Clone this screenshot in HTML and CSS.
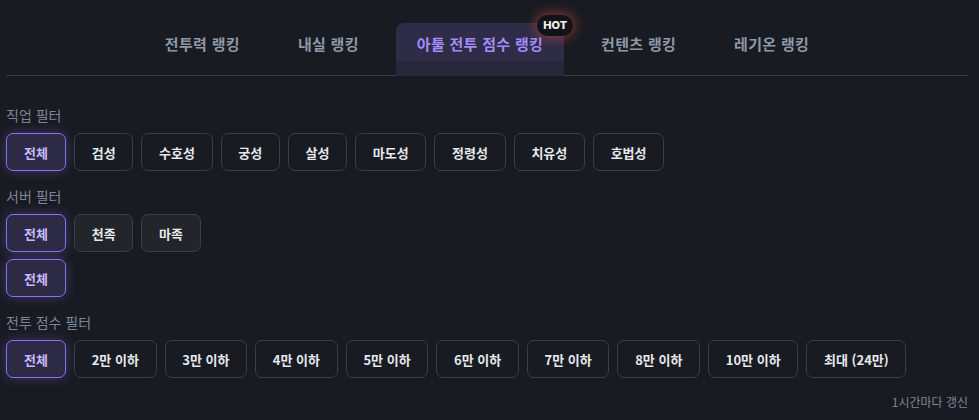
FILE: index.html
```html
<!DOCTYPE html>
<html lang="ko">

<head>
    <meta charset="UTF-8">
    <meta name="viewport" content="width=device-width, initial-scale=1.0">
    <title>랭킹</title>
    <link rel="stylesheet" href="styles.css">
</head>

<body>
    <div class="ranking-page">
        <!-- 랭킹 탭 -->
        <nav class="tab-bar">
            <a class="tab">전투력 랭킹</a>
            <a class="tab">내실 랭킹</a>
            <a class="tab active">아툴 전투 점수 랭킹<span class="hot-badge">HOT</span></a>
            <a class="tab">컨텐츠 랭킹</a>
            <a class="tab">레기온 랭킹</a>
        </nav>

        <!-- 직업 필터 -->
        <section class="filter-group">
            <div class="filter-label">직업 필터</div>
            <div class="filter-row">
                <button class="filter-btn active">전체</button>
                <button class="filter-btn">검성</button>
                <button class="filter-btn">수호성</button>
                <button class="filter-btn">궁성</button>
                <button class="filter-btn">살성</button>
                <button class="filter-btn">마도성</button>
                <button class="filter-btn">정령성</button>
                <button class="filter-btn">치유성</button>
                <button class="filter-btn">호법성</button>
            </div>
        </section>

        <!-- 서버 필터 -->
        <section class="filter-group">
            <div class="filter-label">서버 필터</div>
            <div class="filter-row">
                <button class="filter-btn active">전체</button>
                <button class="filter-btn filled">천족</button>
                <button class="filter-btn filled">마족</button>
            </div>
            <div class="filter-row">
                <button class="filter-btn active">전체</button>
            </div>
        </section>

        <!-- 전투 점수 필터 -->
        <section class="filter-group">
            <div class="filter-label">전투 점수 필터</div>
            <div class="filter-row">
                <button class="filter-btn active">전체</button>
                <button class="filter-btn">2만 이하</button>
                <button class="filter-btn">3만 이하</button>
                <button class="filter-btn">4만 이하</button>
                <button class="filter-btn">5만 이하</button>
                <button class="filter-btn">6만 이하</button>
                <button class="filter-btn">7만 이하</button>
                <button class="filter-btn">8만 이하</button>
                <button class="filter-btn">10만 이하</button>
                <button class="filter-btn">최대 (24만)</button>
            </div>
        </section>

        <p class="update-note">1시간마다 갱신</p>
    </div>
</body>

</html>
```

FILE: styles.css
```css
:root {
    --bg: #181b22;
    --line: #3a3d44;
    --text-muted: #7d8693;
    --tab-text: #8e98a6;
    --accent: #a48bfa;
    --accent-border: #8a70ea;
    --btn-border: #3b3e45;
}

* {
    margin: 0;
    padding: 0;
    box-sizing: border-box;
}

body {
    background: var(--bg);
    font-family: 'Noto Sans CJK KR', 'Noto Sans', sans-serif;
    color: #e6e8ec;
}

.ranking-page {
    padding: 23px 11px 0 6px;
}

/* 탭 */
.tab-bar {
    display: flex;
    justify-content: center;
    gap: 16px;
    border-bottom: 1px solid var(--line);
    margin-bottom: 29px;
}

.tab {
    position: relative;
    height: 53px;
    padding: 0 21px;
    line-height: 41px;
    font-size: 15px;
    font-weight: 700;
    letter-spacing: 0.3px;
    color: var(--tab-text);
    text-decoration: none;
    border-radius: 8px 8px 0 0;
    margin-bottom: -1px;
}

.tab.active {
    color: var(--accent);
    background: linear-gradient(#2e2c46 0, #2e2c46 38px, #272739 38px);
}

.hot-badge {
    position: absolute;
    top: -8px;
    right: -9px;
    height: 21px;
    padding: 0 6px;
    line-height: 21px;
    font-size: 11px;
    font-weight: 800;
    letter-spacing: 0;
    color: #f2f2f2;
    background: #121317;
    border-radius: 11px;
    box-shadow: 0 0 12px 2px rgba(230, 80, 80, 0.5);
    font-family: 'Inter', 'Noto Sans', sans-serif;
}

/* 필터 */
.filter-group {
    margin-bottom: 15px;
}

.filter-label {
    font-size: 14px;
    line-height: 20px;
    color: var(--text-muted);
    margin-bottom: 8px;
}

.filter-row {
    display: flex;
    gap: 8px;
    margin-bottom: 7px;
}

.filter-row:last-child {
    margin-bottom: 0;
}

.filter-btn {
    height: 38px;
    padding: 0 16.7px;
    font-family: inherit;
    font-size: 13px;
    font-weight: 700;
    white-space: nowrap;
    color: #e6e8ec;
    background: transparent;
    border: 1px solid var(--btn-border);
    border-radius: 7px;
    cursor: pointer;
}

.filter-btn.filled {
    background: #222529;
}

.filter-btn.active {
    width: 60px;
    padding: 0;
    color: #c8b8ff;
    background: #2c2a44;
    border-color: var(--accent-border);
    box-shadow: 0 0 12px rgba(139, 108, 240, 0.35);
}

.update-note {
    text-align: right;
    font-size: 12px;
    line-height: 18px;
    color: var(--text-muted);
    margin-top: 1px;
}
```
